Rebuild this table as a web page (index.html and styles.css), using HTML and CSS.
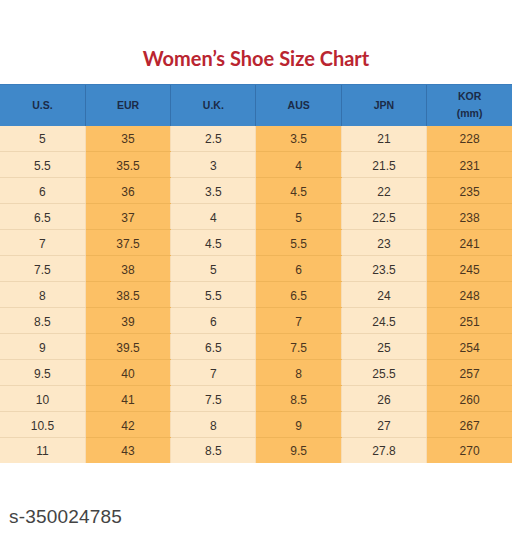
FILE: index.html
```html
<!DOCTYPE html>
<html>
<head>
<meta charset="utf-8">
<link rel="stylesheet" href="styles.css">
</head>
<body>
<div class="page">
  <h1 class="title">Women’s Shoe Size Chart</h1>
  <table class="chart">
    <thead>
      <tr><th>U.S.</th><th>EUR</th><th>U.K.</th><th>AUS</th><th>JPN</th><th>KOR<br>(mm)</th></tr>
    </thead>
    <tbody>
      <tr><td>5</td><td>35</td><td>2.5</td><td>3.5</td><td>21</td><td>228</td></tr>
      <tr><td>5.5</td><td>35.5</td><td>3</td><td>4</td><td>21.5</td><td>231</td></tr>
      <tr><td>6</td><td>36</td><td>3.5</td><td>4.5</td><td>22</td><td>235</td></tr>
      <tr><td>6.5</td><td>37</td><td>4</td><td>5</td><td>22.5</td><td>238</td></tr>
      <tr><td>7</td><td>37.5</td><td>4.5</td><td>5.5</td><td>23</td><td>241</td></tr>
      <tr><td>7.5</td><td>38</td><td>5</td><td>6</td><td>23.5</td><td>245</td></tr>
      <tr><td>8</td><td>38.5</td><td>5.5</td><td>6.5</td><td>24</td><td>248</td></tr>
      <tr><td>8.5</td><td>39</td><td>6</td><td>7</td><td>24.5</td><td>251</td></tr>
      <tr><td>9</td><td>39.5</td><td>6.5</td><td>7.5</td><td>25</td><td>254</td></tr>
      <tr><td>9.5</td><td>40</td><td>7</td><td>8</td><td>25.5</td><td>257</td></tr>
      <tr><td>10</td><td>41</td><td>7.5</td><td>8.5</td><td>26</td><td>260</td></tr>
      <tr><td>10.5</td><td>42</td><td>8</td><td>9</td><td>27</td><td>267</td></tr>
      <tr><td>11</td><td>43</td><td>8.5</td><td>9.5</td><td>27.8</td><td>270</td></tr>
    </tbody>
  </table>
  <div class="sku">s-350024785</div>
</div>
</body>
</html>
```

FILE: styles.css
```css
html, body {
  margin: 0;
  padding: 0;
  background: #ffffff;
}
.page {
  width: 512px;
  height: 535px;
  padding-top: 46px;
  box-sizing: border-box;
}
.title {
  margin: 0;
  height: 38px;
  text-align: center;
  font-family: "Lato", "Liberation Sans", sans-serif;
  font-weight: 700;
  font-size: 20px;
  line-height: 24px;
  color: #ba2530;
}
.chart {
  width: 512px;
  border-collapse: collapse;
  table-layout: fixed;
  font-family: "Liberation Sans", Arial, sans-serif;
}
.chart th {
  height: 41px;
  padding: 0;
  background: #4088c9;
  color: #1b2b47;
  font-size: 10.5px;
  line-height: 17px;
  font-weight: 700;
  text-align: center;
  border-left: 1px solid #3471ad;
  border-top: 1px solid #3a7dbd;
  box-sizing: border-box;
}
.chart th:first-child { border-left: none; }
.chart td {
  height: 26px;
  padding: 2px 0 0;
  font-size: 12px;
  color: #38322e;
  text-align: center;
  background: #fde8c8;
  border-bottom: 1px solid #eed6b2;
  border-left: 1px solid #f7dcb5;
  box-sizing: border-box;
}
.chart td:first-child { border-left: none; }
.chart td:nth-child(2n) {
  background: #fcc065;
  border-bottom-color: #efb458;
  color: #4a3520;
}
.chart tr:last-child td { border-bottom: none; height: 25px; }
.sku {
  margin-top: 43px;
  padding-left: 9px;
  font-family: "Liberation Sans", Arial, sans-serif;
  font-size: 19px;
  color: #444444;
  letter-spacing: 0.2px;
}
```
